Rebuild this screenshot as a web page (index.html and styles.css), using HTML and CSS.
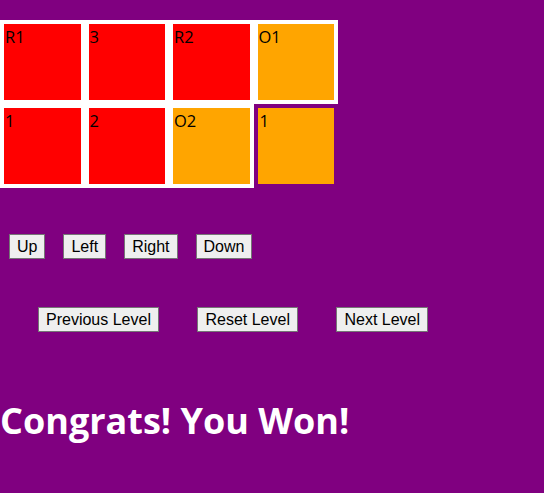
FILE: index.html
```html
<!DOCTYPE html>
<html>
<head>
<meta charset="utf-8">
<link rel="stylesheet" href="styles.css">
</head>
<body>
<div class="board">
  <div class="cell red">R1</div>
  <div class="cell red">3</div>
  <div class="cell red">R2</div>
  <div class="cell orange">O1</div>
  <div class="cell red">1</div>
  <div class="cell red">2</div>
  <div class="cell orange">O2</div>
  <div class="cell orange target">1</div>
</div>
<div class="controls">
  <button class="btn">Up</button>
  <button class="btn">Left</button>
  <button class="btn">Right</button>
  <button class="btn">Down</button>
</div>
<div class="levels">
  <button class="btn">Previous Level</button>
  <button class="btn">Reset Level</button>
  <button class="btn">Next Level</button>
</div>
<h1 class="message">Congrats! You Won!</h1>
</body>
</html>
```
FILE: styles.css
```css
html, body {
  margin: 0;
  padding: 0;
  background: #800080;
}
body {
  font-family: "Open Sans", "Noto Sans", sans-serif;
  width: 544px;
  height: 493px;
  overflow: hidden;
}
.board {
  margin-top: 20px;
  display: grid;
  grid-template-columns: repeat(4, 84.5px);
  grid-auto-rows: 84px;
}
.cell {
  box-sizing: border-box;
  border: 4px solid #ffffff;
  font-size: 16.5px;
  color: #000;
  padding: 2px 1px 0;
  line-height: 22px;
}
.red { background: #ff0000; }
.orange { background: #ffa500; }
.target { border-color: #800080; padding-left: 2px; }
.controls {
  display: flex;
  gap: 18px;
  padding-left: 9px;
  margin-top: 46px;
}
.levels {
  display: flex;
  gap: 38.5px;
  padding-left: 38px;
  margin-top: 48px;
}
.btn {
  font-family: "Liberation Sans", Arial, sans-serif;
  font-size: 16px;
  line-height: 19px;
  padding: 2px 7px;
  border: 1px solid #767676;
  border-radius: 0;
  background: #efefef;
  color: #000;
  margin: 0;
}
.message {
  margin: 67px 0 0;
  font-size: 36px;
  line-height: 44px;
  font-weight: 700;
  color: #ffffff;
}
```
